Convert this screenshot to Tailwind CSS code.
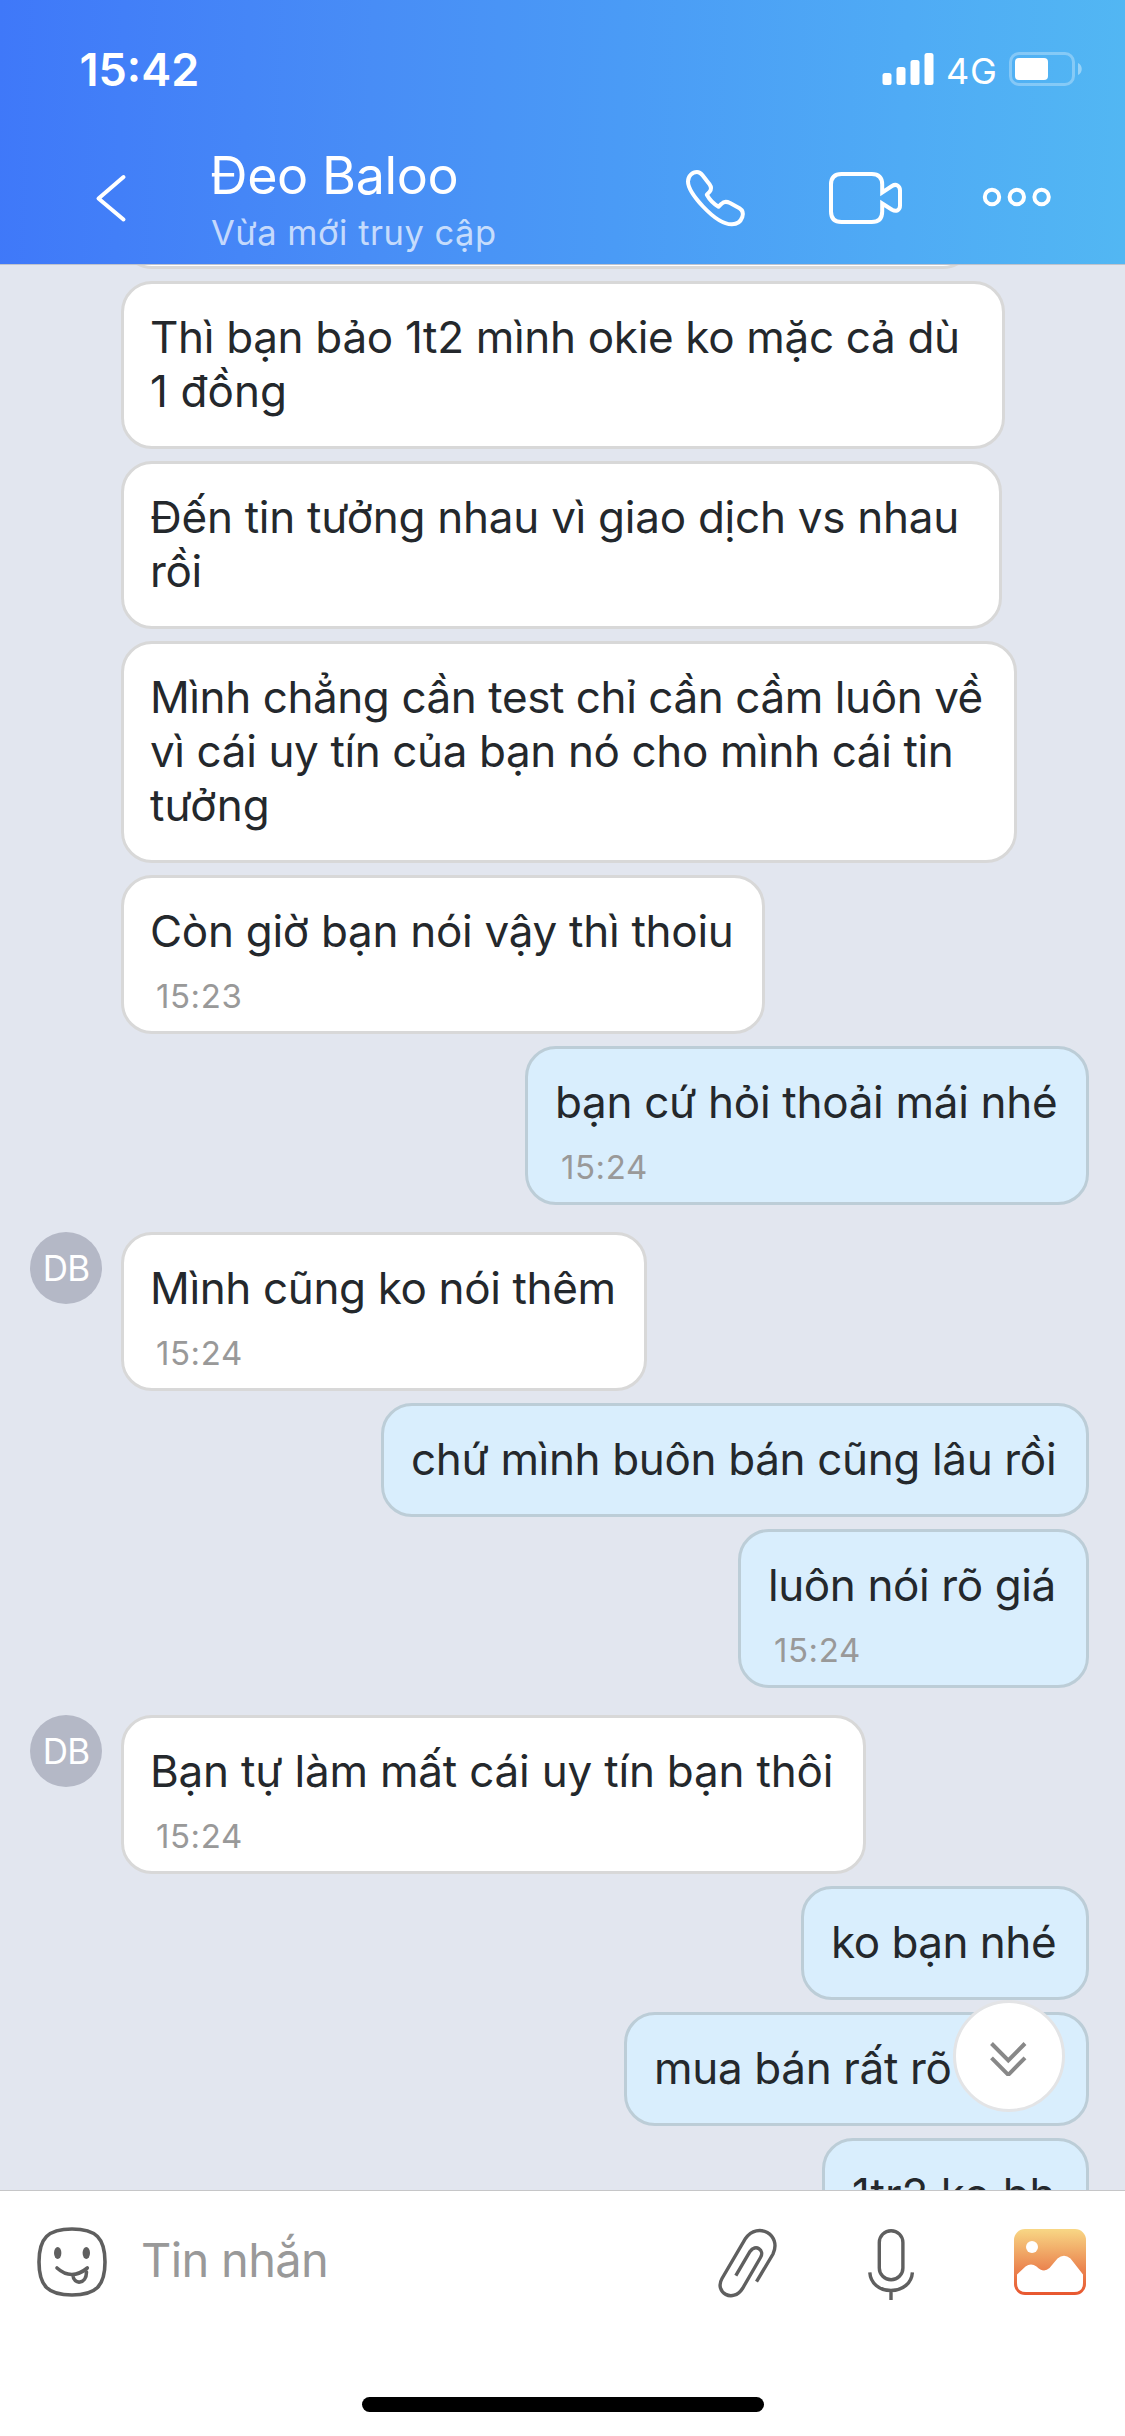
<!DOCTYPE html>
<html lang="vi">
<head>
<meta charset="utf-8">
<title>Đeo Baloo</title>
<script src="https://cdn.jsdelivr.net/npm/@tailwindcss/browser@4"></script>
</head>
<body class="w-[1125px] h-[2436px] overflow-hidden bg-white font-['Inter','Noto_Sans',sans-serif] text-[#24282c] flex flex-col">

<!-- Status bar and conversation header -->
<header class="h-[264px] shrink-0 bg-linear-[92deg,#3f78f9_0%,#488df6_33%,#4a9bf6_55%,#4fabf5_80%,#52b7f3_100%] text-white">
  <div class="h-[138px] flex items-center pl-[79.5px] pr-[42px]">
    <div class="pt-px text-[45px] leading-[54px] font-semibold">15:42</div>
    <svg class="ml-auto w-[52px] h-[34px]" viewBox="881.5 52 52 34" fill="#fff">
      <rect x="882" y="73" width="9" height="12" rx="2.5"/><rect x="896" y="67" width="9" height="18" rx="2.5"/><rect x="910" y="60" width="9" height="25" rx="2.5"/><rect x="924" y="53" width="9" height="32" rx="2.5"/>
    </svg>
    <div class="ml-[12px] pt-[3px] w-[52px] text-[36px] leading-[42px] tracking-[0.8px] whitespace-nowrap">4G</div>
    <svg class="ml-[11px] w-[74px] h-[34px]" viewBox="1009 52 74 34">
      <rect x="1010.5" y="53.5" width="63" height="31" rx="8.5" fill="none" stroke="#fff" stroke-opacity=".3" stroke-width="3"/>
      <rect x="1015" y="58" width="33" height="22" rx="4" fill="#fff"/>
      <path d="M1078 63c5 2 5 10 0 12z" fill="#fff" fill-opacity=".4"/>
    </svg>
  </div>
  <div class="h-[120px] flex items-center">
    <svg class="ml-[92px] w-[40px] h-[56px] shrink-0" viewBox="92 170.500 40 56" fill="none" stroke="#fff" stroke-width="4" stroke-linecap="round" stroke-linejoin="round"><path d="M123.500 177.500L98.500 199L123.500 220" /></svg>
    <div class="ml-[78px] mt-[4px] w-[472px]">
      <div class="text-[52px] leading-[60px] tracking-[-0.4px]">Đeo Baloo</div>
      <div class="mt-[6px] ml-[1px] text-[34.5px] leading-[42px] tracking-[0.51px] text-white/70">Vừa mới truy cập</div>
    </div>
    <svg class="w-[66px] h-[60px] shrink-0" viewBox="682 168 66 60" fill="none" stroke="#fff" stroke-width="4" stroke-linejoin="round"><path d="M697 172C699.500 172 701 173.300 702.500 175.300L709.500 184.300C711.700 187.300 711.500 189.600 709.500 191.900L706.800 194.700C709.500 199.500 713.500 203.700 718.500 206.700L721.500 203.800C723.500 201.700 726.500 201.300 730 203L739.500 208.300C743 210.500 743.500 213.500 742.300 217C740.500 222 737 224.300 732 224.300C723 224.500 711.500 215.500 703 206.500C696 199 688 188.500 688 181.500C688 176 692.500 172 697 172Z"/></svg>
    <svg class="ml-[77px] w-[80px] h-[60px] shrink-0" viewBox="825 168 80 60" fill="none" stroke="#fff" stroke-width="4"><path d="M882.200 192.500V184.500Q882.200 174 871.700 174H841.500Q831 174 831 184.500V211.500Q831 222 841.500 222H871.700Q882.200 222 882.200 211.500V203.500L892 209.800C896 212 900 210.500 900 205.500V190.500C900 185.500 896 183.500 892 186Z"/></svg>
    <svg class="ml-[75px] w-[74px] h-[60px] shrink-0" viewBox="980 168 74 60" fill="none" stroke="#fff" stroke-width="4"><circle cx="992" cy="197" r="7.200"/><circle cx="1016.800" cy="197" r="7.200"/><circle cx="1041.600" cy="197" r="7.200"/></svg>
  </div>
</header>

<!-- Messages -->
<main class="relative h-[1926px] shrink-0 overflow-hidden bg-[#e2e6ef] border-t border-[#bfc3cd] flex flex-col gap-[12px] text-[44px] leading-[54px] whitespace-nowrap">
  <div class="-mt-[110px] ml-[121px] w-[853px] h-[114px] shrink-0 rounded-[31px] border-[3px] border-[#d8d8d8] bg-white"></div>

  <div class="ml-[121px] w-[884px] h-[168px] shrink-0 rounded-[31px] border-[3px] border-[#d8d8d8] bg-white pt-[26px] pl-[26px]">
    <p class="tracking-[-0.32px]">Thì bạn bảo 1t2 mình okie ko mặc cả dù</p>
    <p class="tracking-[0.1px]">1 đồng</p>
  </div>

  <div class="ml-[121px] w-[881px] h-[168px] shrink-0 rounded-[31px] border-[3px] border-[#d8d8d8] bg-white pt-[26px] pl-[26px]">
    <p class="tracking-[-0.26px]">Đến tin tưởng nhau vì giao dịch vs nhau</p>
    <p class="tracking-[-0.4px]">rồi</p>
  </div>

  <div class="ml-[121px] w-[896px] h-[222px] shrink-0 rounded-[31px] border-[3px] border-[#d8d8d8] bg-white pt-[26px] pl-[26px]">
    <p class="tracking-[-0.42px]">Mình chẳng cần test chỉ cần cầm luôn về</p>
    <p class="tracking-[-0.38px]">vì cái uy tín của bạn nó cho mình cái tin</p>
    <p class="tracking-[0.1px]">tưởng</p>
  </div>

  <div class="ml-[121px] w-[644px] h-[159px] shrink-0 rounded-[31px] border-[3px] border-[#d8d8d8] bg-white pt-[26px] pl-[26px]">
    <p class="tracking-[-0.28px]">Còn giờ bạn nói vậy thì thoiu</p>
    <p class="mt-[16px] ml-[6px] text-[33px] leading-[45px] tracking-[0.57px] text-[#999]">15:23</p>
  </div>

  <div class="self-end mr-[36px] w-[564px] h-[159px] shrink-0 rounded-[31px] border-[3px] border-[#bccdd7] bg-[#d9eefd] pt-[26px] pl-[27px]">
    <p class="tracking-[-0.3px]">bạn cứ hỏi thoải mái nhé</p>
    <p class="mt-[16px] ml-[6px] text-[33px] leading-[45px] tracking-[0.57px] text-[#999]">15:24</p>
  </div>

  <div class="mt-[15px] ml-[30px] shrink-0 flex items-start gap-[19px]">
    <div class="size-[72px] rounded-full bg-[#b4b8c6] text-white text-[35px] leading-[72px] tracking-[-0.8px] text-center">DB</div>
    <div class="w-[526px] h-[159px] rounded-[31px] border-[3px] border-[#d8d8d8] bg-white pt-[26px] pl-[26px]">
      <p class="tracking-[-0.36px]">Mình cũng ko nói thêm</p>
      <p class="mt-[16px] ml-[6px] text-[33px] leading-[45px] tracking-[0.57px] text-[#999]">15:24</p>
    </div>
  </div>

  <div class="self-end mr-[36px] w-[708px] h-[114px] shrink-0 rounded-[31px] border-[3px] border-[#bccdd7] bg-[#d9eefd] pt-[26px] pl-[27px]">
    <p class="tracking-[-0.35px]">chứ mình buôn bán cũng lâu rồi</p>
  </div>

  <div class="self-end mr-[36px] w-[351px] h-[159px] shrink-0 rounded-[31px] border-[3px] border-[#bccdd7] bg-[#d9eefd] pt-[26px] pl-[27px]">
    <p class="tracking-[-0.4px]">luôn nói rõ giá</p>
    <p class="mt-[16px] ml-[6px] text-[33px] leading-[45px] tracking-[0.57px] text-[#999]">15:24</p>
  </div>

  <div class="mt-[15px] ml-[30px] shrink-0 flex items-start gap-[19px]">
    <div class="size-[72px] rounded-full bg-[#b4b8c6] text-white text-[35px] leading-[72px] tracking-[-0.8px] text-center">DB</div>
    <div class="w-[745px] h-[159px] rounded-[31px] border-[3px] border-[#d8d8d8] bg-white pt-[26px] pl-[26px]">
      <p class="tracking-[-0.2px]">Bạn tự làm mất cái uy tín bạn thôi</p>
      <p class="mt-[16px] ml-[6px] text-[33px] leading-[45px] tracking-[0.57px] text-[#999]">15:24</p>
    </div>
  </div>

  <div class="self-end mr-[36px] w-[288px] h-[114px] shrink-0 rounded-[31px] border-[3px] border-[#bccdd7] bg-[#d9eefd] pt-[26px] pl-[27px]">
    <p class="tracking-[-0.5px]">ko bạn nhé</p>
  </div>

  <div class="self-end mr-[36px] w-[465px] h-[114px] shrink-0 rounded-[31px] border-[3px] border-[#bccdd7] bg-[#d9eefd] pt-[26px] pl-[27px]">
    <p class="tracking-[-0.34px]">mua bán rất rõ</p>
  </div>

  <div class="self-end mr-[36px] w-[267px] h-[114px] shrink-0 rounded-[31px] border-[3px] border-[#bccdd7] bg-[#d9eefd] pt-[26px] pl-[27px]">
    <p>1tr2 ko bh</p>
  </div>

  <!-- Scroll-to-latest button -->
  <button class="absolute right-[60px] bottom-[78px] size-[112px] rounded-full border-[3px] border-[#e3e4e6] bg-white flex items-center justify-center" aria-label="Xuống cuối">
    <svg class="w-[40px] h-[40px]" viewBox="988.5 2036 40 40" fill="none" stroke="#888" stroke-width="4"><path d="M991 2043.500L1007.800 2060.500L1024.500 2043.500M991 2057.800L1007.800 2074.800L1024.500 2057.800"/></svg>
  </button>
</main>

<!-- Message composer -->
<footer class="h-[246px] shrink-0 border-t border-[#c6c6c8] bg-white flex flex-col items-center">
  <div class="h-[144px] w-full flex items-center">
    <svg class="ml-[32px] w-[80px] h-[80px] shrink-0" viewBox="32 2223 80 80" fill="none" stroke="#5f5f5f" stroke-width="3.600" stroke-linecap="round">
      <path d="M72 2229C96 2229 105 2238 105 2262S96 2295 72 2295S39 2286 39 2262S48 2229 72 2229Z"/>
      <path d="M57 2268Q71.500 2281 87.300 2268M73 2275.500C73.500 2285 86.500 2284.500 86.500 2272"/>
      <ellipse cx="57.700" cy="2253" rx="3.700" ry="6" fill="#5f5f5f" stroke="none"/><ellipse cx="86.300" cy="2253" rx="3.700" ry="6" fill="#5f5f5f" stroke="none"/>
    </svg>
    <div class="-mt-[6px] ml-[29px] w-[569px] text-[47px] leading-[60px] tracking-[-0.66px] text-[#999]">Tin nhắn</div>
    <svg class="w-[76px] h-[80px] shrink-0" viewBox="709.5 2223 76 80" fill="none" stroke="#5f5f5f" stroke-width="3.400"><path d="M735.300 2275.700L749.500 2251.500C755 2243.500 764.500 2250 760 2257.500L742 2288.500C732.500 2303.500 713.500 2292.500 721.500 2278.500L745 2238.500C757.500 2221 781.500 2235 772.500 2254L756 2281.700"/></svg>
    <svg class="ml-[74px] w-[62px] h-[80px] shrink-0" viewBox="860 2223 62 80" fill="none" stroke="#5f5f5f" stroke-width="3.400"><rect x="879.300" y="2230.700" width="23.600" height="49" rx="11.800"/><path d="M869.800 2272.300C870.500 2283 879 2290.500 891 2290.500S911.700 2283 912.400 2272.300M891 2290.500V2300"/></svg>
    <svg class="ml-[84px] w-[88px] h-[80px] shrink-0" viewBox="1006 2223 88 80">
      <defs><linearGradient id="photo" x1="0" y1="0" x2="0" y2="1"><stop offset="0" stop-color="#f8d785"/><stop offset=".6" stop-color="#eb8650"/><stop offset="1" stop-color="#e8562f"/></linearGradient></defs>
      <rect x="1014" y="2229" width="72" height="66" rx="11" fill="url(#photo)"/>
      <circle cx="1032" cy="2247" r="6" fill="#fff"/>
      <path d="M1017 2274.500L1025.500 2266.500Q1031 2262.500 1036.500 2266.500Q1043.500 2273.500 1049.500 2268L1057.500 2258.500Q1064 2252.800 1070.500 2258.500L1083 2274.500V2283Q1083 2292 1074 2292H1026Q1017 2292 1017 2283Z" fill="#fff"/>
    </svg>
  </div>
  <div class="mt-[62px] w-[402px] h-[15px] shrink-0 rounded-full bg-black"></div>
</footer>
</body>
</html>
